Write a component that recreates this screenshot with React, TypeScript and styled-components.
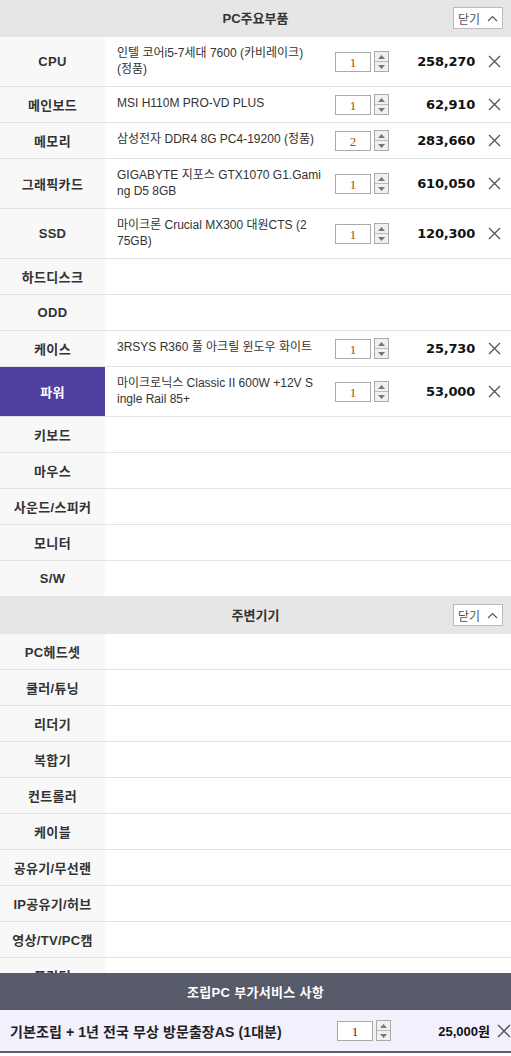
import styled, { createGlobalStyle } from "styled-components";

const GlobalStyle = createGlobalStyle`
  html, body {
    margin: 0;
    padding: 0;
    background: #fff;
  }
  body {
    font-family: "Liberation Sans", "Noto Sans CJK KR", sans-serif;
    color: #333;
  }
`;

interface Part {
  label: string;
  name?: string;
  qty?: number;
  price?: string;
  active?: boolean;
}

// line breaks kept as the shop's list shows them
const mainParts: Part[] = [
  { label: "CPU", name: "인텔 코어i5-7세대 7600 (카비레이크)\n(정품)", qty: 1, price: "258,270" },
  { label: "메인보드", name: "MSI H110M PRO-VD PLUS", qty: 1, price: "62,910" },
  { label: "메모리", name: "삼성전자 DDR4 8G PC4-19200 (정품)", qty: 2, price: "283,660" },
  { label: "그래픽카드", name: "GIGABYTE 지포스 GTX1070 G1.Gami\nng D5 8GB", qty: 1, price: "610,050" },
  { label: "SSD", name: "마이크론 Crucial MX300 대원CTS (2\n75GB)", qty: 1, price: "120,300" },
  { label: "하드디스크" },
  { label: "ODD" },
  { label: "케이스", name: "3RSYS R360 풀 아크릴 윈도우 화이트", qty: 1, price: "25,730" },
  { label: "파워", name: "마이크로닉스 Classic II 600W +12V S\ningle Rail 85+", qty: 1, price: "53,000", active: true },
  { label: "키보드" },
  { label: "마우스" },
  { label: "사운드/스피커" },
  { label: "모니터" },
  { label: "S/W" },
];

const extraParts: Part[] = [
  { label: "PC헤드셋" },
  { label: "쿨러/튜닝" },
  { label: "리더기" },
  { label: "복합기" },
  { label: "컨트롤러" },
  { label: "케이블" },
  { label: "공유기/무선랜" },
  { label: "IP공유기/허브" },
  { label: "영상/TV/PC캠" },
  { label: "프린터" },
];

const Page = styled.div`
  width: 511px;
  height: 1056px;
  display: flex;
  flex-direction: column;
  overflow: hidden;
`;

const ListArea = styled.div`
  height: 973px;
  overflow: hidden;
  flex-shrink: 0;
`;

const SectionHead = styled.div`
  height: 37px;
  background: #e6e6e6;
  display: flex;
  align-items: center;
  justify-content: center;
  position: relative;
  font-size: 13px;
  font-weight: bold;
  color: #333;
  padding-bottom: 3px;
  box-sizing: border-box;
`;

const CloseButton = styled.button`
  position: absolute;
  right: 8px;
  top: 7px;
  height: 22px;
  width: 50px;
  padding: 0 0 0 4px;
  border: 1px solid #bbb;
  background: #fff;
  font-family: inherit;
  font-size: 12px;
  color: #555;
  display: flex;
  align-items: center;
  gap: 7px;
  cursor: pointer;
`;

const Row = styled.div`
  display: flex;
  min-height: 35px;
  border-bottom: 1px solid #e3e3e3;
`;

const LabelCell = styled.div<{ $active?: boolean }>`
  width: 105px;
  flex-shrink: 0;
  display: flex;
  align-items: center;
  justify-content: center;
  font-size: 13px;
  font-weight: bold;
  letter-spacing: 0.3px;
  color: ${(p) => (p.$active ? "#fff" : "#333")};
  background: ${(p) => (p.$active ? "#4f3f9f" : "#f8f8f8")};
`;

const NameCell = styled.div`
  width: 206px;
  flex-shrink: 0;
  padding: 8px 12px 9px 12px;
  font-size: 12px;
  line-height: 16px;
  color: #333;
  white-space: pre;
`;

const QtyBox = styled.div`
  display: flex;
  align-items: center;
  gap: 3px;
`;

const QtyInput = styled.div<{ $color?: string }>`
  width: 34px;
  height: 18px;
  border: 1px solid #aaa;
  background: #fff;
  font-size: 13px;
  line-height: 20px;
  text-align: center;
  color: ${(p) => p.$color || "#a0520a"};
  font-family: "Liberation Serif", serif;
`;

const Spinner = styled.div`
  width: 13px;
  height: 19px;
  border: 1px solid #aaa;
  background: #f0f0f0;
  display: flex;
  flex-direction: column;
`;

const SpinHalf = styled.div`
  flex: 1;
  display: flex;
  align-items: center;
  justify-content: center;
  & + & {
    border-top: 1px solid #bbb;
  }
`;

const Price = styled.div`
  flex: 1;
  text-align: right;
  font-size: 13px;
  font-weight: bold;
  color: #111;
  font-family: "DejaVu Sans", "Liberation Sans", sans-serif;
  letter-spacing: -0.2px;
  padding-right: 2px;
`;

const RemoveBtn = styled.div`
  width: 34px;
  flex-shrink: 0;
  display: flex;
  align-items: center;
  justify-content: center;
`;

const RightPart = styled.div`
  flex: 1;
  display: flex;
  align-items: center;
`;

const FooterHead = styled.div`
  height: 37px;
  background: #575b69;
  color: #fff;
  font-size: 13px;
  font-weight: bold;
  letter-spacing: 0.3px;
  display: flex;
  align-items: center;
  justify-content: center;
`;

const FooterRow = styled.div`
  height: 41px;
  background: #f2f0fd;
  border-bottom: 2px solid #5b5e6a;
  display: flex;
  align-items: center;
  padding-left: 10px;
`;

const FooterLabel = styled.div`
  width: 327px;
  font-size: 14px;
  font-weight: bold;
  letter-spacing: 0.1px;
  color: #222;
`;

const FooterPrice = styled.div`
  flex: 1;
  text-align: right;
  font-size: 13px;
  font-weight: bold;
  color: #111;
`;

const FooterRemove = styled.div`
  width: 21px;
  display: flex;
  justify-content: flex-end;
  align-items: center;
  overflow: hidden;
`;

const Chevron = () => (
  <svg width="11" height="7" viewBox="0 0 11 7">
    <path d="M1 6 L5.5 1.5 L10 6" fill="none" stroke="#555" strokeWidth="1.2" />
  </svg>
);

const Cross = ({ size = 13 }: { size?: number }) => (
  <svg width={size} height={size} viewBox="0 0 13 13">
    <path d="M1 1 L12 12 M12 1 L1 12" stroke="#555" strokeWidth="1.3" />
  </svg>
);

const Qty = ({ value, color }: { value: number; color?: string }) => (
  <QtyBox>
    <QtyInput $color={color}>{value}</QtyInput>
    <Spinner>
      <SpinHalf>
        <svg width="7" height="4" viewBox="0 0 7 4">
          <path d="M0 4 L3.5 0 L7 4 Z" fill="#777" />
        </svg>
      </SpinHalf>
      <SpinHalf>
        <svg width="7" height="4" viewBox="0 0 7 4">
          <path d="M0 0 L3.5 4 L7 0 Z" fill="#777" />
        </svg>
      </SpinHalf>
    </Spinner>
  </QtyBox>
);

const PartRow = ({ part }: { part: Part }) => (
  <Row>
    <LabelCell $active={part.active}>{part.label}</LabelCell>
    {part.name && (
      <>
        <NameCell>{part.name}</NameCell>
        <RightPart>
          <Qty value={part.qty || 1} />
          <Price>{part.price}</Price>
          <RemoveBtn>
            <Cross />
          </RemoveBtn>
        </RightPart>
      </>
    )}
  </Row>
);

const Section = ({ title, parts }: { title: string; parts: Part[] }) => (
  <div>
    <SectionHead>
      {title}
      <CloseButton>
        닫기 <Chevron />
      </CloseButton>
    </SectionHead>
    {parts.map((p) => (
      <PartRow key={p.label} part={p} />
    ))}
  </div>
);

export default function App() {
  return (
    <Page>
      <GlobalStyle />
      <ListArea>
        <Section title="PC주요부품" parts={mainParts} />
        <Section title="주변기기" parts={extraParts} />
      </ListArea>
      <FooterHead>조립PC 부가서비스 사항</FooterHead>
      <FooterRow>
        <FooterLabel>기본조립 + 1년 전국 무상 방문출장AS (1대분)</FooterLabel>
        <Qty value={1} color="#6a0a2a" />
        <FooterPrice>25,000원</FooterPrice>
        <FooterRemove>
          <Cross size={14} />
        </FooterRemove>
      </FooterRow>
    </Page>
  );
}
